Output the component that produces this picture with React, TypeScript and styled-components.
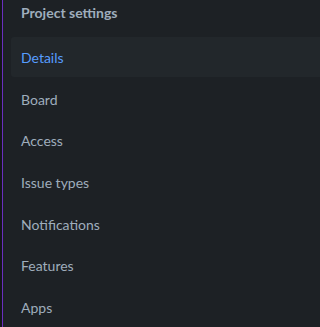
import React from "react";
import styled, { createGlobalStyle } from "styled-components";

const Global = createGlobalStyle`
  html, body { margin: 0; padding: 0; background: #1d2125; }
  body { font-family: Lato, "Liberation Sans", sans-serif; }
`;

const Sidebar = styled.nav`
  width: 100%;
  height: 327px;
  box-sizing: border-box;
  background: #1d2125;
  border-left: 2px solid #141719;
  position: relative;
  overflow: hidden;
  display: flex;
  flex-direction: column;
  &::before {
    content: "";
    position: absolute;
    left: 0;
    top: 0;
    bottom: 0;
    width: 1px;
    background: #6a2fc0;
  }
`;

const Heading = styled.div`
  font-size: 14px;
  font-weight: 700;
  color: #9fadbc;
  padding: 3px 0 0 19px;
  height: 38px;
  box-sizing: border-box;
  line-height: 20px;
`;

const List = styled.ul`
  list-style: none;
  margin: 0;
  padding: 0 0 0 9px;
  display: flex;
  flex-direction: column;
  gap: 1.67px;
`;

const Item = styled.li<{ $active?: boolean }>`
  height: 40px;
  display: flex;
  align-items: center;
  padding: 1px 0 0 10px;
  box-sizing: border-box;
  margin-right: -8px;
  border-radius: 3px;
  font-size: 14px;
  color: ${(p) => (p.$active ? "#579dff" : "#9fadbc")};
  background: ${(p) => (p.$active ? "#22272b" : "transparent")};
`;

const items = ["Details", "Board", "Access", "Issue types", "Notifications", "Features", "Apps"];

export default function App() {
  return (
    <>
      <Global />
      <Sidebar>
        <Heading>Project settings</Heading>
        <List>
          {items.map((t, i) => (
            <Item key={t} $active={i === 0}>
              {t}
            </Item>
          ))}
        </List>
      </Sidebar>
    </>
  );
}
